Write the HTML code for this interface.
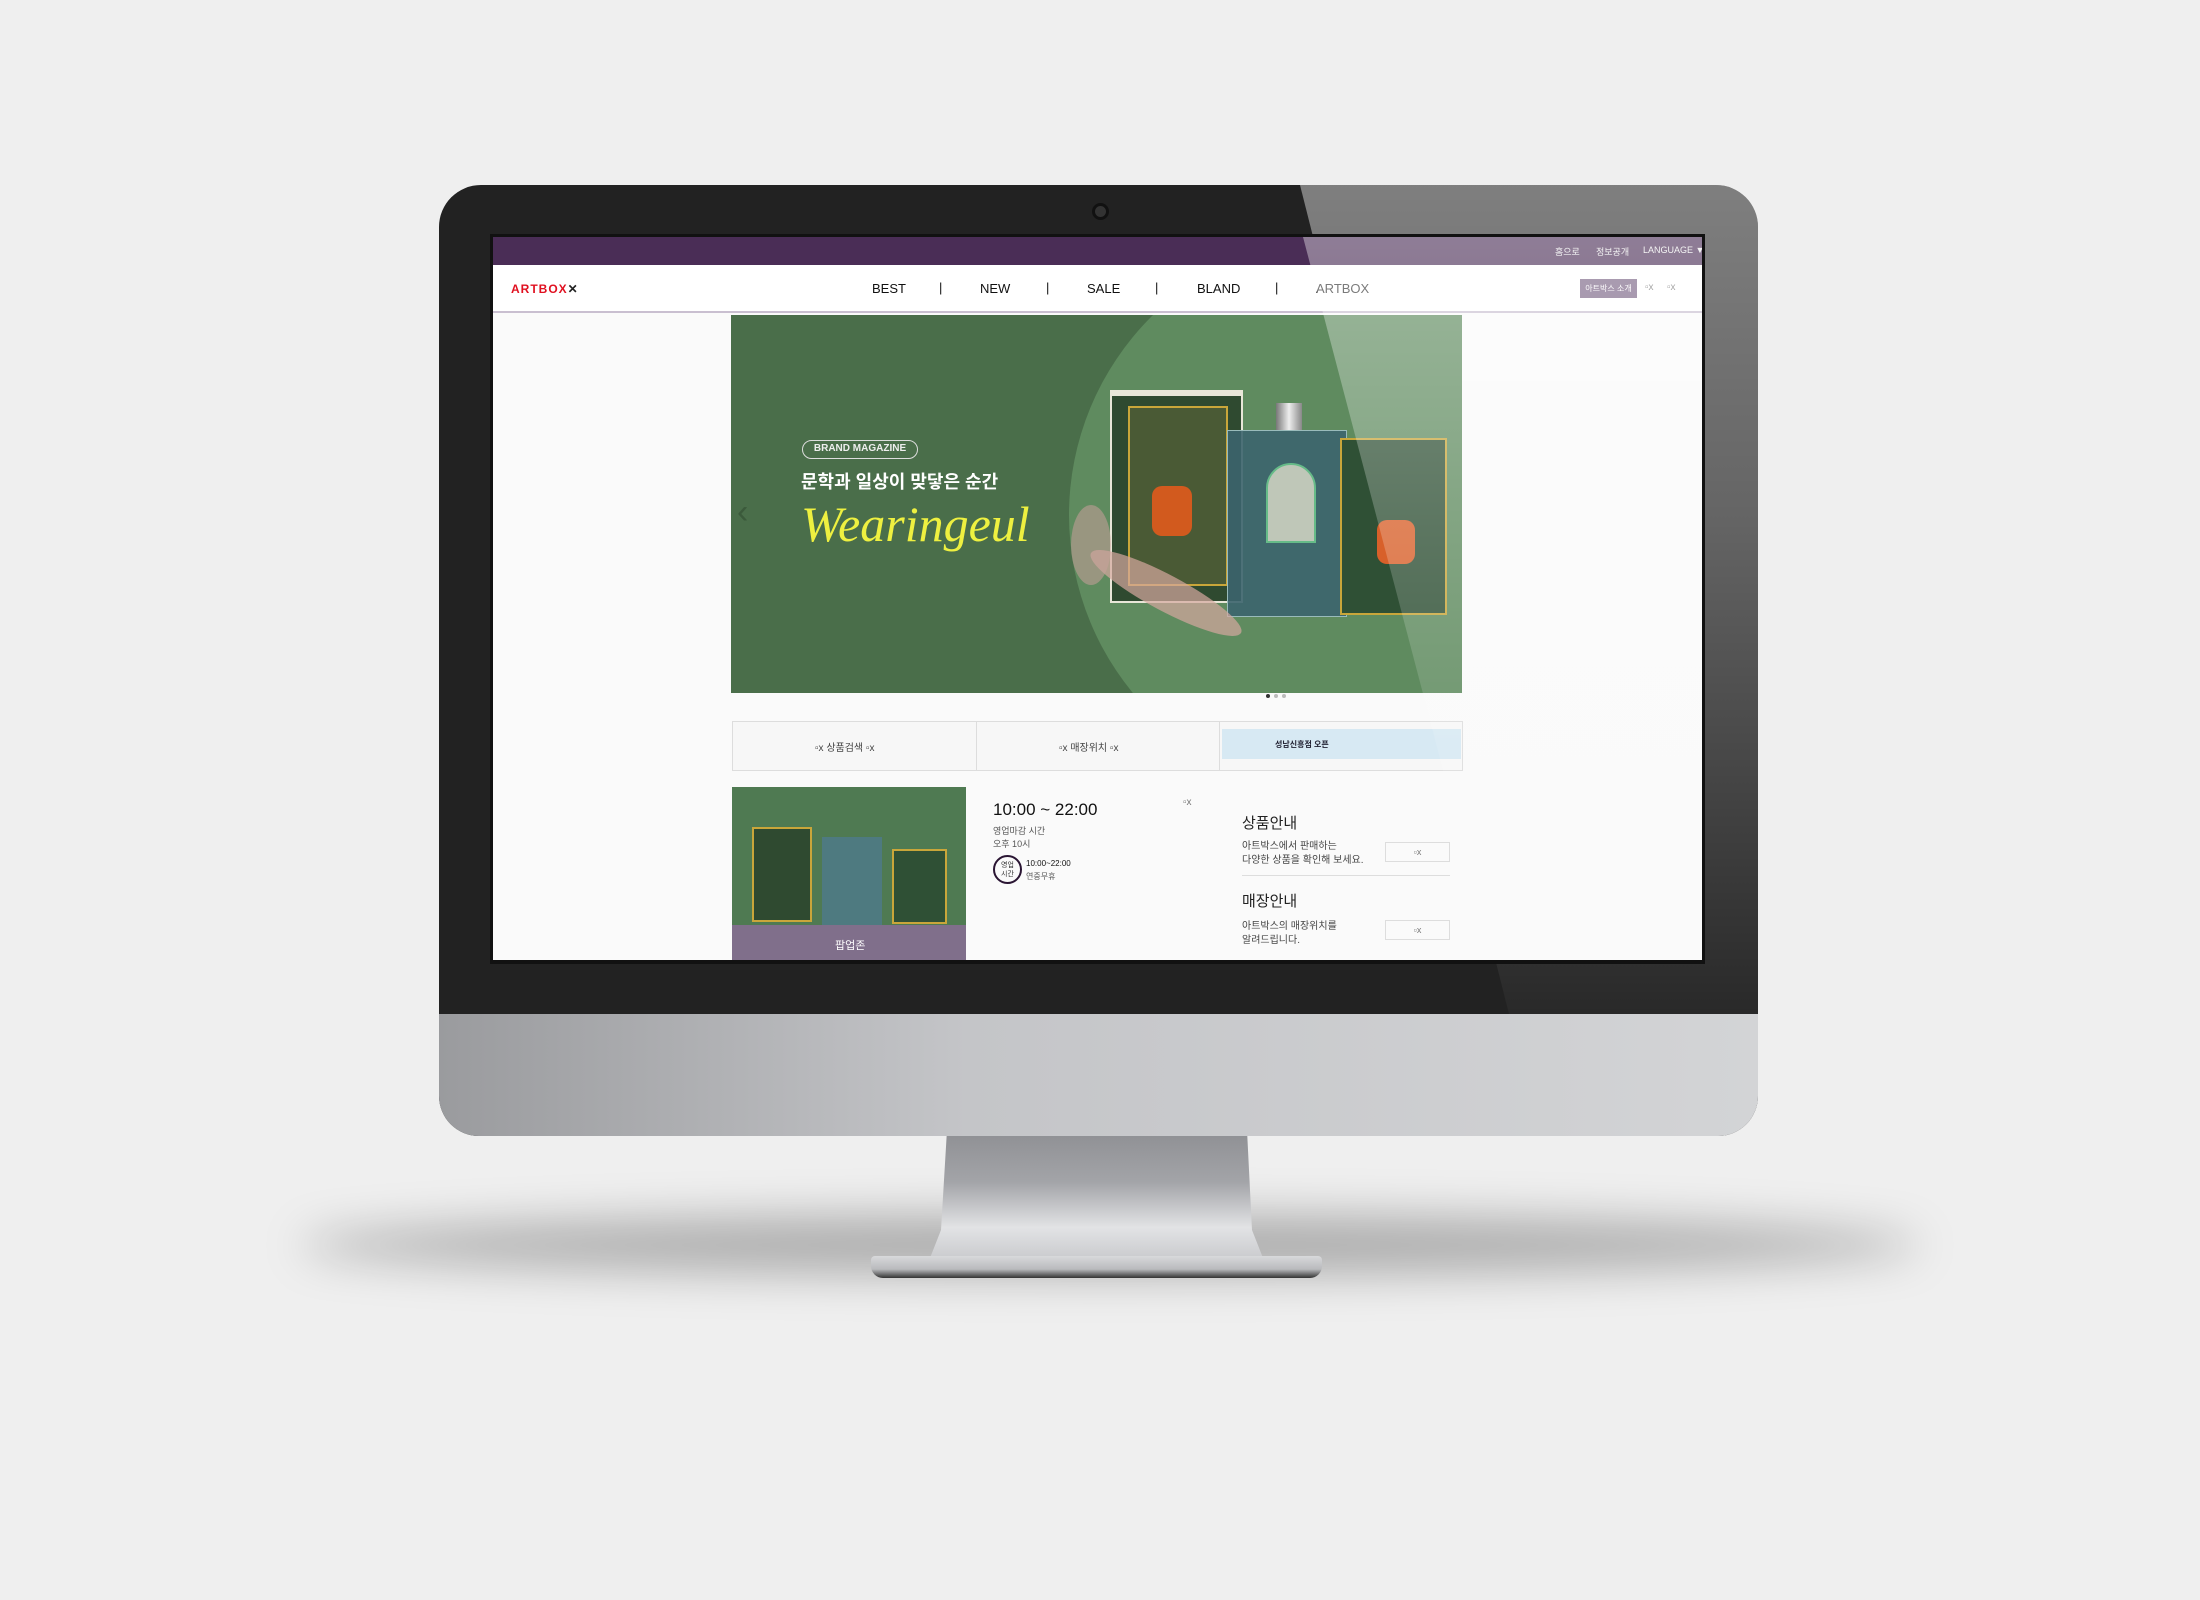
<!DOCTYPE html>
<html><head><meta charset="utf-8"><style>
*{margin:0;padding:0;box-sizing:border-box}
body{width:2200px;height:1600px;background:#efefef;position:relative;overflow:hidden;font-family:"Liberation Sans","Noto Sans CJK KR",sans-serif}
.a{position:absolute}
.t{position:absolute;white-space:nowrap}
.brk{font-size:10px;color:#777}
</style></head><body>
<div class="a" style="left:300px;top:1215px;width:1620px;height:60px;border-radius:50%;background:rgba(0,0,0,0.28);filter:blur(22px)"></div>
<div class="a" style="left:930px;top:1130px;width:333px;height:130px;background:linear-gradient(#8e8f93,#a3a4a8 40%,#e2e3e5 75%,#c9cacd);clip-path:polygon(17px 0,317px 0,322px 100px,333px 128px,0 128px,11px 100px)"></div>
<div class="a" style="left:871px;top:1256px;width:451px;height:22px;background:linear-gradient(#d8d9db,#b9babd 60%,#333);border-radius:4px 4px 12px 12px"></div>
<div class="a" style="left:439px;top:185px;width:1319px;height:951px;border-radius:42px 42px 40px 40px;overflow:hidden;background:#222">
 <div class="a" style="left:0;top:829px;width:1319px;height:122px;background:linear-gradient(90deg,#9a9b9e,#c4c5c8 40%,#d3d4d6)"></div>
 <div class="a" style="left:653px;top:18px;width:17px;height:17px;border-radius:50%;background:#333;border:3px solid #111"></div>
 <div class="a" style="left:0;top:0;width:1319px;height:829px;background:linear-gradient(rgba(255,255,255,0.42),rgba(255,255,255,0.3) 40%,rgba(255,255,255,0.03));clip-path:polygon(861px 0,1319px 0,1319px 829px,1070px 829px)"></div>
</div>
<div class="a" style="left:490px;top:234px;width:1215px;height:730px;background:#111"></div>
<div class="a" style="left:493px;top:237px;width:1209px;height:723px;background:#fafafa;overflow:hidden">
 <div class="a" style="left:0;top:0;width:1209px;height:28px;background:#4a2d56"></div>
 <div class="t" style="left:1062px;top:8px;font-size:9px;color:#eee">홈으로</div>
 <div class="t" style="left:1103px;top:8px;font-size:9px;color:#eee">정보공개</div>
 <div class="t" style="left:1150px;top:8px;font-size:9px;color:#eee">LANGUAGE ▼</div>
 <div class="a" style="left:0;top:28px;width:1209px;height:48px;background:#fff;border-bottom:2px solid #c9bfd0"></div>
 <div class="t" style="left:18px;top:45px;font-size:12px;font-weight:bold;color:#e01020;letter-spacing:1px">ARTBOX<span style="color:#222">✕</span></div>
 <div class="t" style="left:379px;top:44px;font-size:13px;color:#111">BEST</div>
 <div class="t" style="left:446px;top:43px;font-size:13px;color:#111">|</div>
 <div class="t" style="left:487px;top:44px;font-size:13px;color:#111">NEW</div>
 <div class="t" style="left:553px;top:43px;font-size:13px;color:#111">|</div>
 <div class="t" style="left:594px;top:44px;font-size:13px;color:#111">SALE</div>
 <div class="t" style="left:662px;top:43px;font-size:13px;color:#111">|</div>
 <div class="t" style="left:704px;top:44px;font-size:13px;color:#111">BLAND</div>
 <div class="t" style="left:782px;top:43px;font-size:13px;color:#111">|</div>
 <div class="t" style="left:823px;top:44px;font-size:13px;color:#333">ARTBOX</div>
 <div class="a" style="left:1087px;top:42px;width:57px;height:19px;background:#7a6485;color:#fff;font-size:8px;text-align:center;line-height:19px">아트박스 소개</div>
 <div class="t brk" style="left:1152px;top:45px">▫x</div><div class="t brk" style="left:1174px;top:45px">▫x</div>
 <div class="a" style="left:238px;top:78px;width:731px;height:378px;background:#4a6e4a;overflow:hidden">
  <div class="a" style="left:338px;top:-80px;width:560px;height:560px;border-radius:50%;background:#5f8b5f"></div>
  <div class="a" style="left:71px;top:125px;width:116px;height:19px;border:1.5px solid #ddd;border-radius:10px;color:#eee;font-size:10px;font-weight:bold;text-align:center;line-height:16px">BRAND MAGAZINE</div>
  <div class="t" style="left:70px;top:153px;font-size:18px;font-weight:bold;color:#fff">문학과 일상이 맞닿은 순간</div>
  <div class="t" style="left:70px;top:180px;font-size:50px;font-style:italic;font-family:'Liberation Serif',serif;color:#eef040">Wearingeul</div>
  <div class="t" style="left:6px;top:178px;font-size:34px;color:#3b5a3b">‹</div>
  <div class="t" style="left:704px;top:178px;font-size:34px;color:#5a3a6a">›</div>
  <div class="a" style="left:379px;top:75px;width:133px;height:213px;background:#2f4a30;border:2px solid #e8e6d8;border-top-width:6px">
   <div class="a" style="left:16px;top:10px;width:100px;height:180px;border:2px solid #c9a63a;background:#4a5a35"></div>
   <div class="a" style="left:40px;top:90px;width:40px;height:50px;background:#d25a1e;border-radius:10px"></div>
  </div>
  <div class="a" style="left:545px;top:88px;width:26px;height:28px;background:linear-gradient(90deg,#777,#eee,#888)"></div>
  <div class="a" style="left:496px;top:115px;width:120px;height:187px;background:rgba(60,100,110,0.9);border:1px solid #9bb">
   <div class="a" style="left:38px;top:32px;width:50px;height:80px;border-radius:25px 25px 0 0;background:#bfc7b8;border:2px solid #6b8"></div>
  </div>
  <div class="a" style="left:609px;top:123px;width:107px;height:177px;background:#2f5035;border:2px solid #c9a63a">
   <div class="a" style="left:35px;top:80px;width:38px;height:44px;background:#d8602a;border-radius:10px"></div>
  </div>
  <div class="a" style="left:350px;top:260px;width:170px;height:36px;background:#d6a8a0;opacity:.7;transform:rotate(28deg);border-radius:50%"></div>
  <div class="a" style="left:340px;top:190px;width:40px;height:80px;background:#c9a19a;opacity:.55;border-radius:50%"></div>
 </div>
 <div class="a" style="left:773px;top:457px;width:4px;height:4px;border-radius:50%;background:#333"></div>
 <div class="a" style="left:781px;top:457px;width:4px;height:4px;border-radius:50%;background:#bbb"></div>
 <div class="a" style="left:789px;top:457px;width:4px;height:4px;border-radius:50%;background:#bbb"></div>
 <div class="a" style="left:239px;top:484px;width:731px;height:50px;border:1px solid #ddd;background:#f7f7f7"></div>
 <div class="a" style="left:483px;top:484px;width:1px;height:50px;background:#ddd"></div>
 <div class="a" style="left:726px;top:484px;width:1px;height:50px;background:#ddd"></div>
 <div class="t" style="left:322px;top:502px;font-size:10px;color:#444">▫x 상품검색 ▫x</div>
 <div class="t" style="left:566px;top:502px;font-size:10px;color:#444">▫x 매장위치 ▫x</div>
 <div class="a" style="left:729px;top:492px;width:239px;height:30px;background:#d7e9f3"></div>
 <div class="t" style="left:782px;top:502px;font-size:8px;font-weight:bold;color:#223">성남신흥점 오픈</div>
 <div class="a" style="left:239px;top:550px;width:234px;height:173px;background:#4f7a52;overflow:hidden">
  <div class="a" style="left:20px;top:40px;width:60px;height:95px;background:#2f4a30;border:2px solid #c9a63a"></div>
  <div class="a" style="left:90px;top:50px;width:60px;height:88px;background:#4e7a80"></div>
  <div class="a" style="left:160px;top:62px;width:55px;height:75px;background:#2f5035;border:2px solid #c9a63a"></div>
  <div class="a" style="left:0;top:138px;width:234px;height:40px;background:#806f8b"></div>
  <div class="t" style="left:103px;top:150px;font-size:11px;color:#fff">팝업존</div>
 </div>
 <div class="t" style="left:500px;top:563px;font-size:17px;color:#111">10:00 ~ 22:00</div>
 <div class="t brk" style="left:690px;top:560px">▫x</div>
 <div class="t" style="left:500px;top:587px;font-size:9px;color:#555">영업마감 시간</div>
 <div class="t" style="left:500px;top:600px;font-size:9px;color:#555">오후 10시</div>
 <div class="a" style="left:500px;top:618px;width:29px;height:29px;border:2.5px solid #2a1533;border-radius:50%;font-size:7px;line-height:9px;text-align:center;padding-top:4px;color:#333">영업<br>시간</div>
 <div class="t" style="left:533px;top:622px;font-size:8px;color:#111">10:00~22:00</div>
 <div class="t" style="left:533px;top:634px;font-size:8px;color:#555">연중무휴</div>
 <div class="t" style="left:749px;top:575px;font-size:15px;color:#222">상품안내</div>
 <div class="t" style="left:749px;top:600px;font-size:10px;color:#444">아트박스에서 판매하는</div>
 <div class="t" style="left:749px;top:614px;font-size:10px;color:#444">다양한 상품을 확인해 보세요.</div>
 <div class="a" style="left:892px;top:605px;width:65px;height:20px;border:1px solid #ddd;background:#fafafa;font-size:9px;color:#777;text-align:center;line-height:18px">▫x</div>
 <div class="a" style="left:749px;top:638px;width:208px;height:1px;background:#ddd"></div>
 <div class="t" style="left:749px;top:653px;font-size:15px;color:#222">매장안내</div>
 <div class="t" style="left:749px;top:680px;font-size:10px;color:#444">아트박스의 매장위치를</div>
 <div class="t" style="left:749px;top:694px;font-size:10px;color:#444">알려드립니다.</div>
 <div class="a" style="left:892px;top:683px;width:65px;height:20px;border:1px solid #ddd;background:#fafafa;font-size:9px;color:#777;text-align:center;line-height:18px">▫x</div>
 <div class="a" style="left:0;top:0;width:1209px;height:723px;background:linear-gradient(rgba(255,255,255,0.38),rgba(255,255,255,0.22) 40%,rgba(255,255,255,0));clip-path:polygon(810px 0,1209px 0,1209px 723px,1000px 723px)"></div>
</div>
</body></html>
